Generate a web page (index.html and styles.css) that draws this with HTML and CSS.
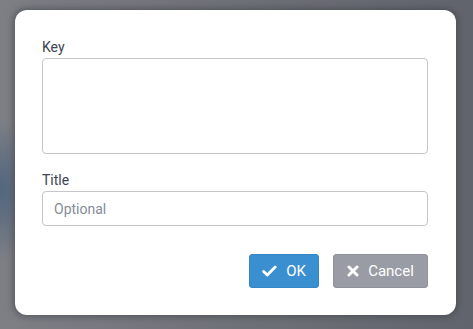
FILE: index.html
```html
<!DOCTYPE html>
<html>
<head>
<meta charset="utf-8">
<link rel="stylesheet" href="styles.css">
</head>
<body>
<div class="backdrop">
  <div class="dialog">
    <div class="field">
      <label class="label">Key</label>
      <textarea class="textarea"></textarea>
    </div>
    <div class="field field-title">
      <label class="label">Title</label>
      <input class="input" type="text" placeholder="Optional">
    </div>
    <div class="actions">
      <button class="btn btn-ok">
        <svg class="icon" width="15" height="12" viewBox="0 0 15 12"><path d="M1.6 6.4 L5.3 10 L13.2 2" fill="none" stroke="#fff" stroke-width="2.8" stroke-linecap="round" stroke-linejoin="round"/></svg>
        <span>OK</span>
      </button>
      <button class="btn btn-cancel">
        <svg class="icon" width="12" height="12" viewBox="0 0 12 12"><path d="M2 2 L10 10 M10 2 L2 10" fill="none" stroke="#fff" stroke-width="3" stroke-linecap="round"/></svg>
        <span>Cancel</span>
      </button>
    </div>
  </div>
</div>
</body>
</html>
```
FILE: styles.css
```css
html, body {
  margin: 0;
  padding: 0;
  width: 473px;
  height: 329px;
  overflow: hidden;
}
body {
  font-family: Roboto, "Liberation Sans", sans-serif;
}
.backdrop {
  width: 473px;
  height: 329px;
  padding: 10px 17px 14px 15px;
  box-sizing: border-box;
  background:
    radial-gradient(ellipse 40px 70px at 0px 190px, rgba(70, 95, 125, 0.8), rgba(70, 95, 125, 0) 100%),
    linear-gradient(90deg, #7d7f85 0%, #6f7178 50%, #61646c 100%);
}
.dialog {
  width: 441px;
  height: 305px;
  box-sizing: border-box;
  background: #fff;
  border-radius: 12px;
  box-shadow: 0 0 6px 2px rgba(60, 62, 70, 0.55);
  padding: 29px 28px 0 27px;
  display: flex;
  flex-direction: column;
}
.field {
  display: flex;
  flex-direction: column;
}
.field-title {
  margin-top: 18px;
}
.label {
  font-size: 14px;
  line-height: 17px;
  color: #3d4450;
  margin-bottom: 2px;
}
.textarea {
  height: 96px;
  box-sizing: border-box;
  border: 1px solid #c4c6cb;
  border-radius: 4px;
  resize: none;
  margin: 0;
  padding: 6px 10px;
  font-family: inherit;
}
.input {
  height: 35px;
  box-sizing: border-box;
  border: 1px solid #c4c6cb;
  border-radius: 4px;
  margin: 0;
  padding: 0 11px;
  font-family: Roboto, "Liberation Sans", sans-serif;
  font-size: 14px;
  color: #3d4450;
}
.input::placeholder {
  color: #858c98;
}
.actions {
  display: flex;
  justify-content: flex-end;
  gap: 14px;
  margin-top: 28px;
}
.btn {
  height: 34px;
  border: none;
  border-radius: 3px;
  color: #fff;
  font-family: Roboto, "Liberation Sans", sans-serif;
  font-size: 15px;
  display: flex;
  align-items: center;
  justify-content: center;
  gap: 9px;
  padding: 0;
  margin: 0;
}
.btn-ok {
  width: 70px;
  background: #3a8fd0;
  border: 1px solid #3486c6;
}
.btn-cancel {
  width: 95px;
  background: #999ca4;
  border: 1px solid #8e9199;
}
.icon {
  display: block;
}
```
